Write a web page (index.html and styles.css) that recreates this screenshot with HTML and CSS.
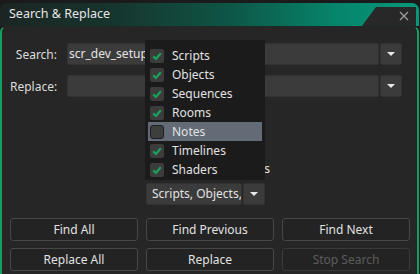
FILE: index.html
```html
<!DOCTYPE html>
<html>
<head>
<meta charset="utf-8">
<link rel="stylesheet" href="styles.css">
</head>
<body>
<div class="window">
  <div class="titlebar">
    <span class="title">Search &amp; Replace</span>
    <div class="tab">
      <svg class="close" width="10" height="10" viewBox="0 0 10 10"><path d="M1 1 L9 9 M9 1 L1 9" stroke="#9a9a9a" stroke-width="1.4" fill="none"/></svg>
    </div>
  </div>
  <div class="panel">
    <div class="form">
      <div class="row">
        <span class="lbl">Search:</span>
        <div class="input">scr_dev_setup</div>
        <div class="drop"><span class="arrow"></span></div>
      </div>
      <div class="row">
        <span class="lbl">Replace:</span>
        <div class="input"></div>
        <div class="drop"><span class="arrow"></span></div>
      </div>
    </div>
    <div class="opts">
      <div class="opt"><span>Include Comments</span></div>
      <div class="scope">
        <div class="combo">Scripts, Objects, Sequences, Rooms, Timelines, Shaders</div>
        <div class="drop small"><span class="arrow"></span></div>
      </div>
    </div>
    <div class="buttons">
      <div class="btn">Find All</div>
      <div class="btn">Find Previous</div>
      <div class="btn">Find Next</div>
      <div class="btn">Replace All</div>
      <div class="btn">Replace</div>
      <div class="btn disabled">Stop Search</div>
    </div>
    <div class="popup">
      <div class="item"><span class="cb on"><svg width="14" height="14" viewBox="0 0 14 14"><path d="M3.2 7.4 L5.9 10 L10.8 4.2" stroke="#19a25c" stroke-width="2.2" fill="none"/></svg></span>Scripts</div>
      <div class="item"><span class="cb on"><svg width="14" height="14" viewBox="0 0 14 14"><path d="M3.2 7.4 L5.9 10 L10.8 4.2" stroke="#19a25c" stroke-width="2.2" fill="none"/></svg></span>Objects</div>
      <div class="item"><span class="cb on"><svg width="14" height="14" viewBox="0 0 14 14"><path d="M3.2 7.4 L5.9 10 L10.8 4.2" stroke="#19a25c" stroke-width="2.2" fill="none"/></svg></span>Sequences</div>
      <div class="item"><span class="cb on"><svg width="14" height="14" viewBox="0 0 14 14"><path d="M3.2 7.4 L5.9 10 L10.8 4.2" stroke="#19a25c" stroke-width="2.2" fill="none"/></svg></span>Rooms</div>
      <div class="item hl"><span class="cb off"></span>Notes</div>
      <div class="item"><span class="cb on"><svg width="14" height="14" viewBox="0 0 14 14"><path d="M3.2 7.4 L5.9 10 L10.8 4.2" stroke="#19a25c" stroke-width="2.2" fill="none"/></svg></span>Timelines</div>
      <div class="item"><span class="cb on"><svg width="14" height="14" viewBox="0 0 14 14"><path d="M3.2 7.4 L5.9 10 L10.8 4.2" stroke="#19a25c" stroke-width="2.2" fill="none"/></svg></span>Shaders</div>
    </div>
  </div>
</div>
</body>
</html>
```

FILE: styles.css
```css
* { box-sizing: border-box; }
html, body { margin: 0; padding: 0; }
body {
  background: #1b1b1b;
  width: 420px;
  height: 274px;
  overflow: hidden;
  font-family: "Noto Sans", "Open Sans", sans-serif;
  font-size: 12px;
  color: #e2e2e2;
}
.window {
  margin-top: 3px;
  width: 419px;
}
.titlebar {
  height: 23px;
  display: flex;
  align-items: stretch;
  justify-content: space-between;
  border-radius: 7px 7px 0 0;
  background: linear-gradient(90deg, #1c2523 0%, #17332c 25%, #0e5646 55%, #06856b 80%, #05977a 100%);
}
.title {
  padding-left: 9px;
  line-height: 21px;
  font-size: 12.5px;
  color: #e6e6e6;
}
.tab {
  margin-top: 4px;
  margin-right: 3px;
  width: 54px;
  background: #282828;
  clip-path: polygon(14px 0, 100% 0, 100% 100%, 0 100%);
  display: flex;
  align-items: center;
  justify-content: flex-end;
  padding-right: 7px;
  padding-bottom: 2px;
}
.panel {
  position: relative;
  height: 260px;
  background: #262626;
  border-left: 2px solid #13a062;
  border-right: 2px solid #13a062;
  border-top: 1px solid #1e2a26;
  border-radius: 6px 6px 0 0;
  padding: 16px 7px 0 8px;
}
.form {
  display: flex;
  flex-direction: column;
  gap: 10px;
  margin-right: 8px;
}
.row {
  display: flex;
  align-items: center;
  height: 22px;
}
.lbl {
  width: 47px;
  text-align: right;
  margin-right: 10px;
  color: #dcdcdc;
}
.input {
  flex: 1;
  height: 22px;
  background: #3b3b3b;
  border: 1px solid #333;
  border-radius: 2px;
  padding-left: 1px;
  line-height: 20px;
  color: #e4e4e4;
  margin-right: 1px;
}
.drop {
  width: 22px;
  height: 22px;
  background: #3b3b3b;
  border: 1px solid #333;
  border-radius: 2px;
  display: flex;
  align-items: center;
  justify-content: center;
}
.arrow {
  width: 0;
  height: 0;
  border-left: 4px solid transparent;
  border-right: 4px solid transparent;
  border-top: 4px solid #e8e8e8;
}
.opts {
  margin-top: 63px;
  padding-left: 136px;
  display: flex;
  flex-direction: column;
}
.opt {
  width: 124px;
  height: 16px;
  display: flex;
  align-items: center;
  justify-content: flex-end;
  white-space: nowrap;
}
.scope {
  margin-top: 7px;
  display: flex;
  height: 22px;
}
.combo {
  width: 96px;
  height: 22px;
  background: #3b3b3b;
  border: 1px solid #333;
  border-radius: 2px;
  padding-left: 5px;
  line-height: 20px;
  white-space: nowrap;
  overflow: hidden;
  margin-right: 1px;
}
.buttons {
  margin-top: 13px;
  display: grid;
  grid-template-columns: 128px 128px 128px;
  column-gap: 8px;
  row-gap: 7px;
}
.btn {
  height: 23px;
  border: 1px solid #474747;
  border-radius: 3px;
  background: #232323;
  display: flex;
  align-items: center;
  justify-content: center;
  color: #e2e2e2;
}
.btn.disabled { color: #5c5c5c; border-color: #3a3a3a; }
.popup {
  position: absolute;
  left: 143px;
  top: 13px;
  width: 120px;
  height: 140px;
  background: #1b1b1b;
  padding: 6px 3px 0 3px;
}
.item {
  height: 19px;
  display: flex;
  align-items: center;
  padding-left: 2px;
  gap: 8px;
  color: #e2e2e2;
}
.item.hl { background: #626b76; }
.cb {
  width: 14px;
  height: 14px;
  flex: none;
  background: #3c3c3c;
  border-radius: 2px;
  display: block;
}
.cb svg { display: block; }
.cb.off {
  border: 1px solid #1f1f1f;
  background: #3e3e3e;
  border-radius: 3px;
}
```
